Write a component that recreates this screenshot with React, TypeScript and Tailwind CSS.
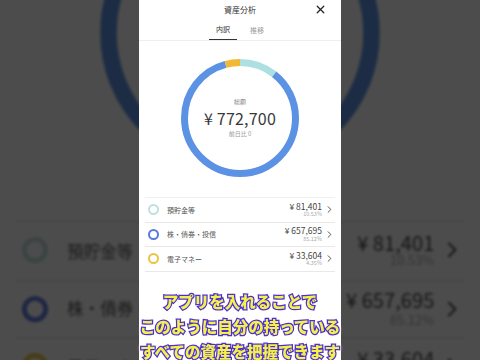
import React from 'react';
import { X, ChevronRight } from 'lucide-react';

const rows = [
  { name: '預貯金等', amount: '¥ 81,401', pct: '10.53%', color: '#c2dfdf' },
  { name: '株・債券・投信', amount: '¥ 657,695', pct: '85.12%', color: '#5b78dc' },
  { name: '電子マネー', amount: '¥ 33,604', pct: '4.35%', color: '#e9c443' },
];

function Donut() {
  const r = 55.5;
  const c = 2 * Math.PI * r;
  const parts = [
    { v: 0.1053, color: '#ade0e0' },
    { v: 0.8512, color: '#5b92e4' },
    { v: 0.0435, color: '#f1b834' },
  ];
  let acc = 0;
  return (
    <svg width="118" height="118" viewBox="0 0 118 118" className="-rotate-90">
      {parts.map((p, i) => {
        const len = p.v * c;
        const el = (
          <circle
            key={i}
            cx="59"
            cy="59"
            r={r}
            fill="none"
            stroke={p.color}
            strokeWidth="7"
            strokeDasharray={`${len} ${c - len}`}
            strokeDashoffset={-acc}
          />
        );
        acc += len;
        return el;
      })}
    </svg>
  );
}

function Screen() {
  return (
    <div className="w-[202px] h-[360px] bg-white flex flex-col font-['Noto_Sans_CJK_JP',sans-serif] text-[#333]">
      {/* Header */}
      <div className="relative h-[20px] flex items-center justify-center">
        <span className="text-[8px] leading-none">資産分析</span>
        <X className="absolute right-[14px] top-[3px]" size={13} strokeWidth={2.4} color="#222" />
      </div>

      {/* Tabs */}
      <div className="flex justify-center gap-[6px] h-[21px] border-b border-[#eeeeee]">
        <div className="w-[28px] flex items-center justify-center text-[7px] border-b-[1.5px] border-[#333]">内訳</div>
        <div className="w-[28px] flex items-center justify-center text-[7px] text-[#999]">推移</div>
      </div>

      {/* Donut */}
      <div className="mt-[18px] flex justify-center">
        <div className="relative w-[118px] h-[118px]">
          <Donut />
          <div className="absolute inset-0 flex flex-col items-center justify-center">
            <span className="text-[6px] text-[#888] leading-none">総額</span>
            <span className="text-[16px] leading-none mt-[5px] tracking-[0.2px] text-[#3a3a3a]">¥ 772,700</span>
            <span className="text-[6px] text-[#999] leading-none mt-[5px]">前日比 0</span>
          </div>
        </div>
      </div>

      {/* List */}
      <div className="mt-[20px] mx-[6px] border-t border-[#f0f0f0]">
        {rows.map((r) => (
          <div key={r.name} className="h-[24.5px] flex items-center border-b border-[#e8e8e8] pl-[3px]">
            <div className="w-[11px] h-[11px] rounded-full border-[2.2px]" style={{ borderColor: r.color }} />
            <span className="ml-[8px] text-[7px] text-[#555] flex-1">{r.name}</span>
            <div className="flex flex-col items-end leading-none">
              <span className="text-[8.5px] text-[#444]">{r.amount}</span>
              <span className="text-[5.5px] text-[#aaa] mt-[2px]">{r.pct}</span>
            </div>
            <ChevronRight className="ml-[2px]" size={11} strokeWidth={1.8} color="#333" />
          </div>
        ))}
      </div>
    </div>
  );
}

export default function App() {
  return (
    <div className="relative w-[480px] h-[360px] overflow-hidden bg-[#4b4b4b] flex justify-center">
      {/* Blurred backdrop */}
      <div aria-hidden className="absolute inset-0 flex justify-center scale-[2.37] brightness-[0.3] blur-[0.6px]">
        <Screen />
      </div>

      <div className="relative">
        <Screen />
      </div>

      {/* Caption */}
      <div className="absolute left-0 right-0 top-[289px] flex flex-col items-center font-['Noto_Sans_CJK_JP',sans-serif] font-black text-[15.5px] leading-[25px] text-[#f6f04a] [-webkit-text-stroke:2.5px_#4a2ed6] [paint-order:stroke_fill] drop-shadow-[0_0_1.5px_#ffffff]">
        <span>アプリを入れることで</span>
        <span>このように自分の持っている</span>
        <span>すべての資産を把握できます</span>
      </div>
    </div>
  );
}
